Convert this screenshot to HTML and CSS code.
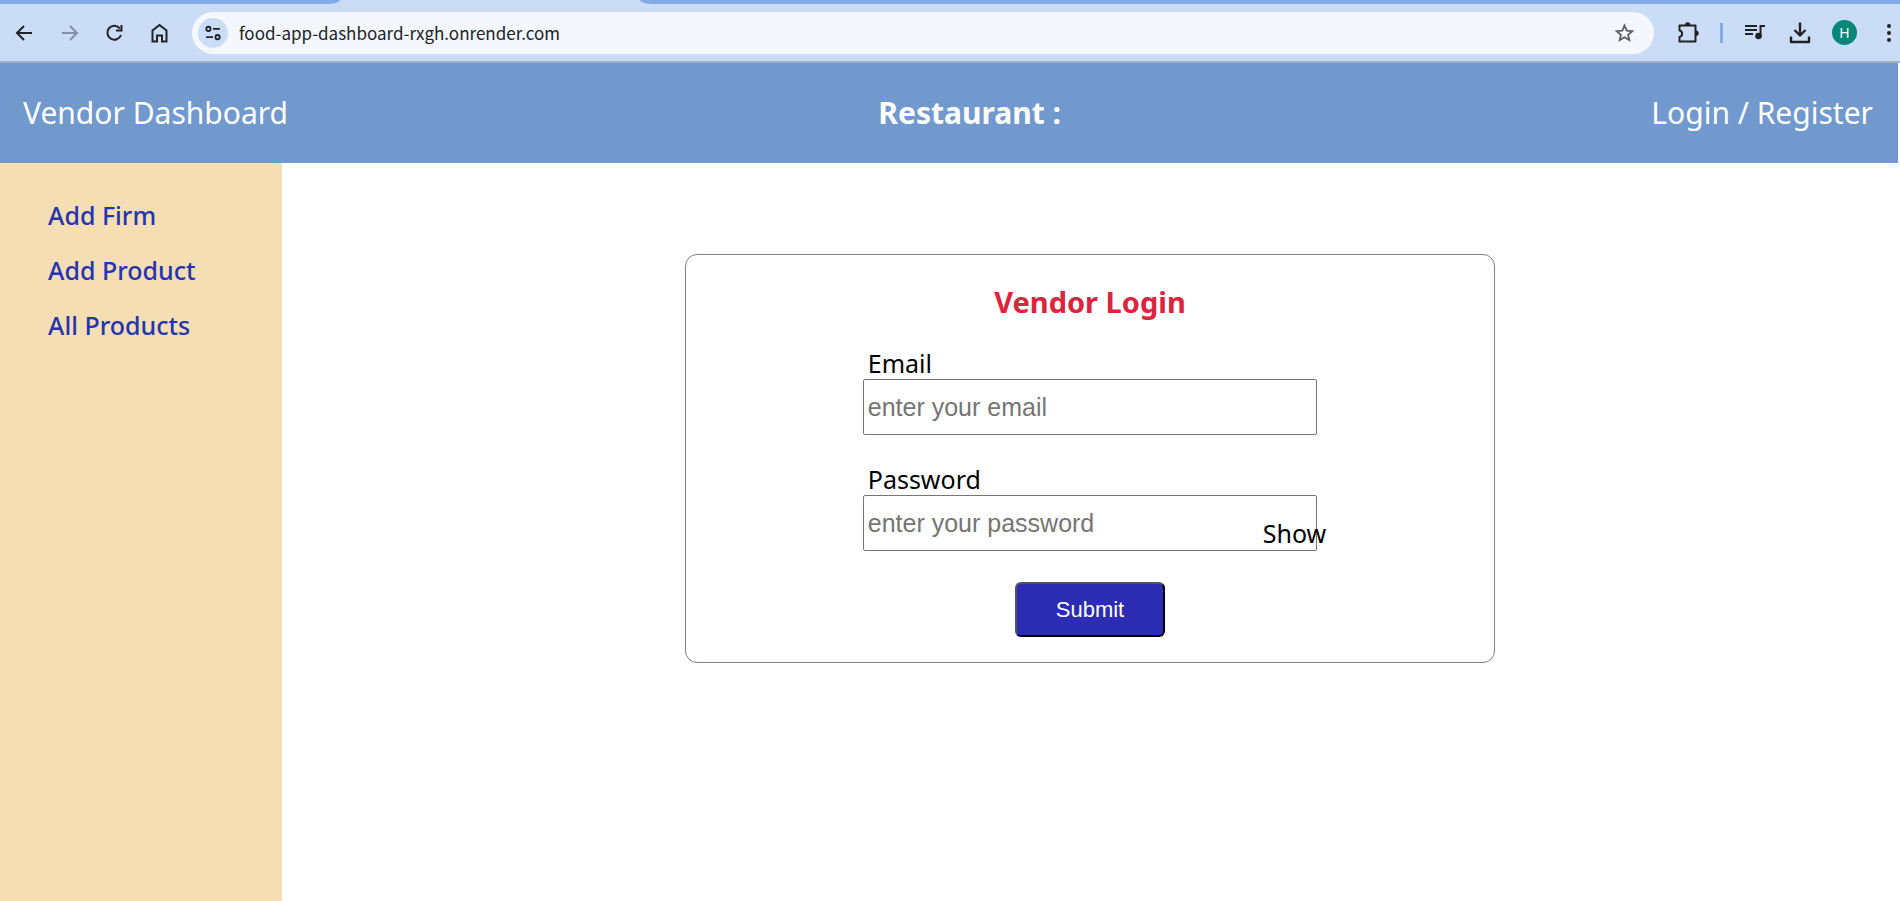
FILE: index.html
```html
<!DOCTYPE html>
<html lang="en">
<head>
<meta charset="utf-8">
<title>Vendor Dashboard</title>
<link rel="stylesheet" href="styles.css">
</head>
<body>
<div class="browser">
  <div class="tabstrip"><span class="tab-left"></span><span class="tab-active"></span><span class="tab-right"></span></div>
  <div class="toolbar">
    <button class="tool" aria-label="Back"><svg viewBox="0 0 24 24"><path d="M20 12H5M12 5l-7 7 7 7"/></svg></button>
    <button class="tool muted" aria-label="Forward"><svg viewBox="0 0 24 24"><path d="M5 12h15M13 5l7 7-7 7"/></svg></button>
    <button class="tool" aria-label="Reload"><svg viewBox="0 0 24 24"><path d="M19 14A7 7 0 1 1 18 7.500"/><path d="M19.500 4v5.500H14"/></svg></button>
    <button class="tool" aria-label="Home"><svg viewBox="0 0 24 24"><path d="M5.500 20.500V9.500l7-5.500 7 5.500v11H15v-6h-5v6z"/></svg></button>
    <div class="address">
      <button class="site" aria-label="Site information"><svg viewBox="0 0 24 24"><circle cx="7" cy="7.500" r="2.300"/><path d="M12 7.500h7.500M4.500 16.500H12"/><circle cx="17" cy="16.500" r="2.300"/></svg></button>
      <input class="url" type="text" aria-label="Address" value="food-app-dashboard-rxgh.onrender.com">
      <button class="star" aria-label="Bookmark"><svg viewBox="0 0 24 24"><path d="M12.500 4.500l2.200 5.100 5.600.5-4.200 3.700 1.200 5.400-4.800-2.900-4.800 2.900 1.200-5.400-4.200-3.700 5.600-.5z"/></svg></button>
    </div>
    <div class="actions">
      <button class="tool" aria-label="Extensions"><svg viewBox="0 0 24 24"><path stroke-linejoin="round" d="M3.500 4.500H19.500V20.500H3.500V16c3.500-1 3.500-5.500 0-6.500z"/><path class="solid" stroke="none" d="M9 4a2.700 2.700 0 0 1 5.400 0zM20 9.500a2.700 2.700 0 0 1 0 5.400z"/></svg></button>
      <span class="rule"></span>
      <button class="tool" aria-label="Media"><svg viewBox="0 0 24 24"><path d="M1 5h12M1 9h12M1 13h8M16.500 16V5H21"/><circle class="solid" cx="14.500" cy="15" r="2.300"/></svg></button>
      <button class="tool" aria-label="Downloads"><svg viewBox="0 0 24 24"><path stroke-width="2.400" stroke-linejoin="round" d="M12 1.500v13M6.500 9L12 14.500 17.500 9M3 15.500v5.500h18v-5.500"/></svg></button>
      <button class="avatar" aria-label="Profile">H</button>
      <button class="tool" aria-label="Menu"><svg viewBox="0 0 24 24"><circle class="solid" cx="12" cy="5" r="1"/><circle class="solid" cx="12" cy="12" r="1"/><circle class="solid" cx="12" cy="19" r="1"/></svg></button>
    </div>
  </div>
</div>
<div class="app">
  <header class="header">
    <a class="brand" href="#">Vendor Dashboard</a>
    <h1 class="restaurant">Restaurant :</h1>
    <div class="account"><a href="#">Login</a> / <a href="#">Register</a></div>
  </header>
  <div class="body">
    <nav class="sidebar">
      <a href="#">Add Firm</a>
      <a href="#">Add Product</a>
      <a href="#">All Products</a>
    </nav>
    <main class="content">
      <form class="card">
        <h2 class="title">Vendor Login</h2>
        <div class="field">
          <label for="email">Email</label>
          <input id="email" type="text" placeholder="enter your email">
        </div>
        <div class="field">
          <label for="password">Password</label>
          <input id="password" type="password" placeholder="enter your password">
          <button class="show" type="button">Show</button>
        </div>
        <button class="submit" type="submit">Submit</button>
      </form>
    </main>
  </div>
</div>
</body>
</html>
```
FILE: styles.css
```css
* { box-sizing: border-box; }
body {
  margin: 0;
  min-height: 100vh;
  display: flex;
  flex-direction: column;
  font-family: "Noto Sans", sans-serif;
  background: #fff;
}
a { color: inherit; text-decoration: none; }
button { font: inherit; padding: 0; border: 0; background: none; color: inherit; }

.browser { background: #cbdcf6; border-bottom: 2px solid #a4afc8; }
.tabstrip { display: flex; height: 4px; background: #cbdcf6; }
.tab-left { width: 340px; background: #84abe8; border-bottom-right-radius: 12px 4px; }
.tab-active { width: 300px; }
.tab-right { flex: 1; background: #84abe8; border-bottom-left-radius: 12px 4px; }
.toolbar { display: flex; align-items: center; height: 57px; padding-left: 12px; color: #202226; }
.tool { width: 24px; height: 24px; margin-right: 21px; flex: none; }
.muted { color: #8590a8; }
svg { display: block; width: 100%; height: 100%; fill: none; stroke: currentColor; stroke-width: 2; }
.solid { fill: currentColor; }
.address {
  flex: 1;
  display: flex;
  align-items: center;
  height: 42px;
  padding: 0 18px 0 6px;
  border-radius: 21px;
  background: #f4f7fd;
}
.site { width: 30px; height: 30px; padding: 4px; border-radius: 50%; background: #cbdcf6; }
.url {
  flex: 1;
  margin-left: 11px;
  padding: 0;
  border: 0;
  background: none;
  color: #202226;
  font: 17px "Noto Sans CJK SC", sans-serif;
}
.star { width: 24px; height: 24px; color: #5a5d63; }
.star svg { stroke-width: 1.800; }
.actions { display: flex; align-items: center; padding-left: 22px; }
.actions .tool { margin-right: 20px; }
.rule { width: 3px; height: 20px; margin-right: 21px; background: #84abe8; }
.avatar {
  width: 25px;
  height: 25px;
  margin-right: 20px;
  border-radius: 50%;
  background: #00897b;
  color: #fff;
  font-size: 14px;
}
.actions .tool:last-child { margin-right: -1px; }

.app { flex: 1; display: flex; flex-direction: column; margin-right: 2px; }
.header {
  display: flex;
  align-items: center;
  justify-content: space-between;
  height: 100px;
  padding: 0 25px 2px 23px;
  background: #7199ce;
  color: #fff;
  font-size: 30px;
}
.restaurant { margin: 0; font-size: 30px; }
.body { flex: 1; display: flex; }
.sidebar {
  display: flex;
  flex-direction: column;
  gap: 15px;
  width: 282px;
  padding: 32px 48px;
  background: #f5deb3;
  color: #2435ad;
  font-size: 25px;
  font-weight: 500;
  line-height: 40px;
}
.content { flex: 1; padding-top: 91px; }
.card {
  box-sizing: content-box;
  display: flex;
  flex-direction: column;
  align-items: center;
  width: 50%;
  margin: 0 auto;
  padding: 27px 0 25px;
  border: 1px solid #808080;
  border-radius: 12px;
}
.title { margin: 0 0 26px; color: #dc243c; font-size: 29px; line-height: 40px; }
.field { position: relative; width: calc(56% + 2px); margin-bottom: 29px; }
.field label { display: block; padding-left: 5px; font-size: 25px; line-height: 31px; }
.field input {
  display: block;
  width: 100%;
  height: 56px;
  padding: 0 4px;
  border: 1px solid #767676;
  border-radius: 2px;
  background: #fff;
  font: 25px "Liberation Sans", sans-serif;
}
.field input::placeholder { color: #757575; }
.show { position: absolute; right: -9px; bottom: 2px; font-size: 25px; line-height: 31px; }
.submit {
  width: 150px;
  height: 55px;
  margin-top: 2px;
  border: 2px outset #000;
  border-radius: 6px;
  background: #2b2bb3;
  color: #fff;
  font: 22px "Liberation Sans", sans-serif;
}
```
